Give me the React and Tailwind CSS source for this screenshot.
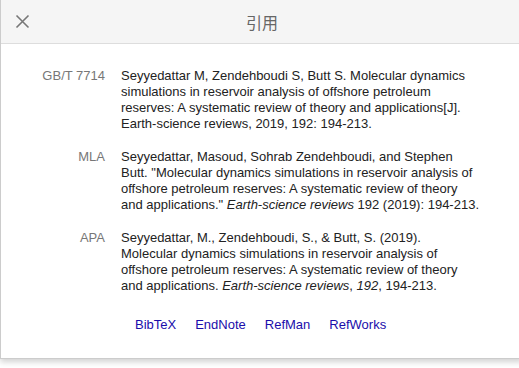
import React from 'react';

const citations = [
  {
    label: 'GB/T 7714',
    text: (
      <>
        Seyyedattar M, Zendehboudi S, Butt S. Molecular dynamics simulations in reservoir analysis of offshore petroleum
        reserves: A systematic review of theory and applications[J]. Earth-science reviews, 2019, 192: 194-213.
      </>
    ),
  },
  {
    label: 'MLA',
    text: (
      <>
        Seyyedattar, Masoud, Sohrab Zendehboudi, and Stephen Butt. "Molecular dynamics simulations in reservoir analysis of
        offshore petroleum reserves: A systematic review of theory and applications." <i>Earth-science reviews</i> 192
        (2019): 194-213.
      </>
    ),
  },
  {
    label: 'APA',
    text: (
      <>
        Seyyedattar, M., Zendehboudi, S., &amp; Butt, S. (2019). Molecular dynamics simulations in reservoir analysis of
        offshore petroleum reserves: A systematic review of theory and applications. <i>Earth-science reviews</i>,{' '}
        <i>192</i>, 194-213.
      </>
    ),
  },
];

const exportLinks = ['BibTeX', 'EndNote', 'RefMan', 'RefWorks'];

const App = () => {
  return (
    <div className="w-[519px] h-[368px] overflow-hidden bg-white font-['Liberation_Sans',Arial,sans-serif]">
      {/* Dialog */}
      <div className="w-[523px] border-l border-b border-[#ccc] bg-white shadow-[0_3px_6px_rgba(0,0,0,0.18)]">
        {/* Header */}
        <div className="relative h-[44px] bg-[#f5f5f5] border-b border-[#ddd] flex items-center justify-center">
          <button className="absolute left-[14px] top-[14px] w-[15px] h-[15px]">
            <svg viewBox="0 0 15 15" className="w-[15px] h-[15px]">
              <path d="M1.5 1.5 L13.5 13.5 M13.5 1.5 L1.5 13.5" stroke="#777" strokeWidth="1.6" fill="none" />
            </svg>
          </button>
          <div className="text-[16px] text-[#666] font-['Noto_Sans_CJK_SC',sans-serif] leading-none">引用</div>
        </div>

        {/* Citations */}
        <div className="pt-[24px] pb-[25px]">
          <div className="flex flex-col gap-[17px]">
            {citations.map((c) => (
              <div key={c.label} className="flex gap-[16px] text-[13px] leading-[16px]">
                <div className="w-[104px] shrink-0 text-right text-[#777]">{c.label}</div>
                <div className="w-[358px] text-[#222]">{c.text}</div>
              </div>
            ))}
          </div>

          <div className="flex gap-[19px] pl-[134px] mt-[23px] text-[13px] leading-[16px]">
            {exportLinks.map((l) => (
              <a key={l} href="#" className="text-[#1a0dab]">
                {l}
              </a>
            ))}
          </div>
        </div>
      </div>
    </div>
  );
};

export default App;
